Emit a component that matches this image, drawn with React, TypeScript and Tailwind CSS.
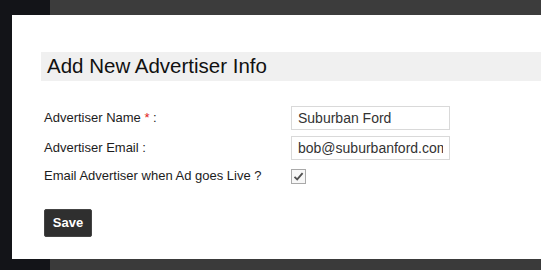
import React from "react";

export default function App() {
  return (
    <div
      className="w-[541px] h-[270px] flex flex-col bg-[#131418] overflow-hidden"
      style={{ fontFamily: '"Liberation Sans", Arial, sans-serif' }}
    >
      <div className="h-[15px] flex shrink-0">
        <div className="w-[50px] bg-[#131418]" />
        <div className="flex-1 bg-[#3c3c3c]" />
      </div>
      <div className="flex h-[244px] shrink-0">
        <div className="w-[12px] bg-[#131418]" />
        <div className="flex-1 bg-white pl-[29px] pt-[37px]">
          <div className="h-[29px] bg-[#f0f0f0] flex items-center pl-[6px] text-[20.5px] text-[#111]">
            Add New Advertiser Info
          </div>
          <div className="pl-[3px] mt-[25px] text-[13px] text-[#1c1c1c]">
            <div className="flex items-center h-[24px]">
              <div className="w-[247px]">
                Advertiser Name <span className="text-[#e02020]">*</span> :
              </div>
              <div className="w-[159px] h-[24px] border border-[#d9d9d9] pl-[6px] pr-[6px] flex items-center text-[14px] text-[#333]">
                <span className="block overflow-hidden whitespace-nowrap w-full">Suburban Ford</span>
              </div>
            </div>
            <div className="flex items-center h-[24px] mt-[6px]">
              <div className="w-[247px]">Advertiser Email :</div>
              <div className="w-[159px] h-[24px] border border-[#d9d9d9] pl-[6px] pr-[6px] flex items-center text-[14px] text-[#333]">
                <span className="block overflow-hidden whitespace-nowrap w-full">bob@suburbanford.com</span>
              </div>
            </div>
            <div className="flex items-center h-[24px] mt-[4px]">
              <div className="w-[247px]">Email Advertiser when Ad goes Live ?</div>
              <div className="w-[15px] h-[15px] border border-[#a9a9a9] bg-[#f7f7f7] flex items-center justify-center">
                <svg width="11" height="11" viewBox="0 0 11 11">
                  <path d="M1.5 5.8 L4.2 8.4 L9.6 2.2" fill="none" stroke="#505050" strokeWidth="1.8" />
                </svg>
              </div>
            </div>
            <button className="mt-[21px] w-[48px] h-[28px] bg-[#2f2f2f] rounded-[2px] text-white text-[13px] font-bold border border-[#444]">
              Save
            </button>
          </div>
        </div>
      </div>
      <div className="h-[11px] flex shrink-0">
        <div className="w-[50px] bg-[#131418]" />
        <div className="flex-1 bg-[#3a3a3a]" />
      </div>
    </div>
  );
}
